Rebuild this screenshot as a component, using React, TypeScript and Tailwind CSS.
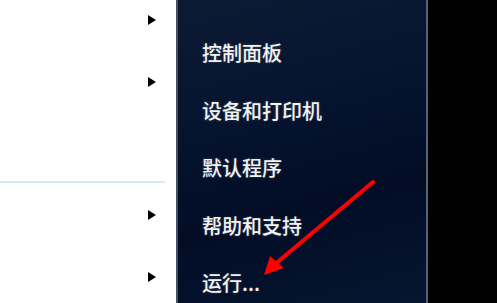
import React from 'react'

const items = ['控制面板', '设备和打印机', '默认程序', '帮助和支持', '运行...']

function Caret({ className = '' }: { className?: string }) {
  return (
    <svg width="8" height="10" viewBox="0 0 8 10" className={className}>
      <polygon points="0,0 8,5 0,10" fill="#000" />
    </svg>
  )
}

export default function App() {
  return (
    <div
      className="relative flex w-[497px] h-[303px] overflow-hidden bg-black"
      style={{ fontFamily: '"Noto Sans CJK SC", "Microsoft YaHei", sans-serif' }}
    >
      {/* left white program list */}
      <div className="w-[176px] h-full bg-white flex flex-col">
        <Caret className="ml-[148px] mt-[15px]" />
        <Caret className="ml-[148px] mt-[52px]" />
        <div className="mt-[94px] w-[165px] h-[2px] bg-[#dbe8f8]" />
        <Caret className="ml-[148px] mt-[27px]" />
        <Caret className="ml-[148px] mt-[52px]" />
      </div>

      {/* dark right pane */}
      <div className="w-[252px] h-full flex flex-col border-l-2 border-l-[#4a5062] border-r-2 border-r-[#56627a] bg-[linear-gradient(165deg,#0c1a34_0%,#061430_35%,#020d25_65%,#061530_100%)]">
        <div className="ml-[24px] mr-[18px] mt-[23px] h-[2px] bg-[#24324c]" />
        <ul className="flex flex-col pl-[24px] pt-[1px]">
          {items.map(t => (
            <li
              key={t}
              className="h-[57.5px] leading-[57.5px] text-[20px] font-medium text-[#f2f2f2] whitespace-nowrap [text-shadow:0_0_3px_rgba(255,255,255,0.2)]"
            >
              {t}
            </li>
          ))}
        </ul>
      </div>

      <div className="flex-1 h-full bg-black" />

      {/* red annotation arrow */}
      <svg className="absolute inset-0 pointer-events-none" width="497" height="303" viewBox="0 0 497 303">
        <line x1="373" y1="182" x2="274" y2="265" stroke="#ff0000" strokeWidth="4" strokeLinecap="round" />
        <polygon points="264,275 270,256 284,268" fill="#ff0000" />
      </svg>
    </div>
  )
}
